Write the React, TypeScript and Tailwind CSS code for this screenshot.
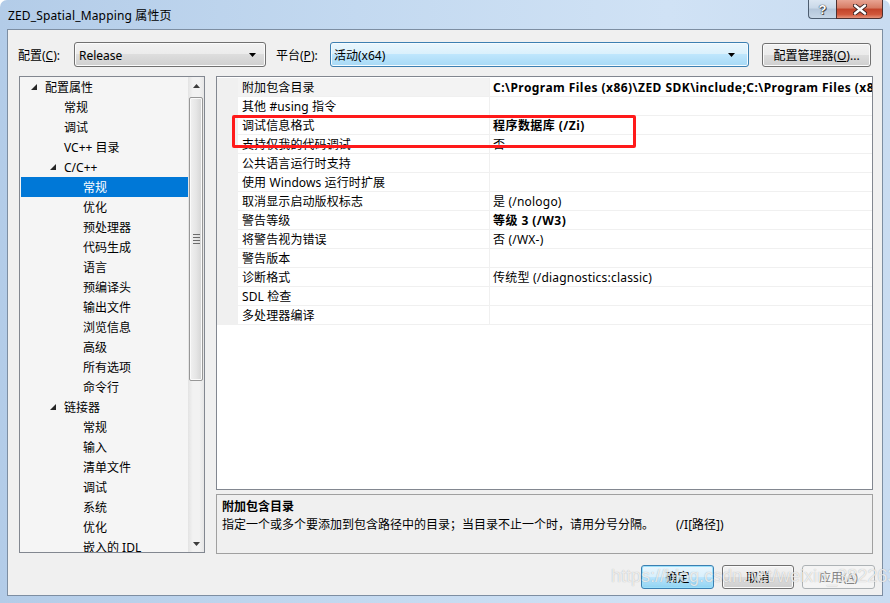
import React from "react";

type TreeItem = { label: string; level: number; arrow?: boolean; selected?: boolean };

const tree: TreeItem[] = [
  { label: "配置属性", level: 0, arrow: true },
  { label: "常规", level: 1 },
  { label: "调试", level: 1 },
  { label: "VC++ 目录", level: 1 },
  { label: "C/C++", level: 1, arrow: true },
  { label: "常规", level: 2, selected: true },
  { label: "优化", level: 2 },
  { label: "预处理器", level: 2 },
  { label: "代码生成", level: 2 },
  { label: "语言", level: 2 },
  { label: "预编译头", level: 2 },
  { label: "输出文件", level: 2 },
  { label: "浏览信息", level: 2 },
  { label: "高级", level: 2 },
  { label: "所有选项", level: 2 },
  { label: "命令行", level: 2 },
  { label: "链接器", level: 1, arrow: true },
  { label: "常规", level: 2 },
  { label: "输入", level: 2 },
  { label: "清单文件", level: 2 },
  { label: "调试", level: 2 },
  { label: "系统", level: 2 },
  { label: "优化", level: 2 },
  { label: "嵌入的 IDL", level: 2 },
];

type Prop = { name: string; value: string; bold?: boolean };

const props: Prop[] = [
  { name: "附加包含目录", value: "C:\\Program Files (x86)\\ZED SDK\\include;C:\\Program Files (x86)\\ZED SDK\\dependencies", bold: true },
  { name: "其他 #using 指令", value: "" },
  { name: "调试信息格式", value: "程序数据库 (/Zi)", bold: true },
  { name: "支持仅我的代码调试", value: "否" },
  { name: "公共语言运行时支持", value: "" },
  { name: "使用 Windows 运行时扩展", value: "" },
  { name: "取消显示启动版权标志", value: "是 (/nologo)" },
  { name: "警告等级", value: "等级 3 (/W3)", bold: true },
  { name: "将警告视为错误", value: "否 (/WX-)" },
  { name: "警告版本", value: "" },
  { name: "诊断格式", value: "传统型 (/diagnostics:classic)" },
  { name: "SDL 检查", value: "" },
  { name: "多处理器编译", value: "" },
];

const indentClass = ["pl-[11px]", "pl-[30px]", "pl-[49px]"];
const textIndentClass = ["pl-[25px]", "pl-[44px]", "pl-[63px]"];

function Expander() {
  return (
    <svg width="6" height="6" viewBox="0 0 6 6" className="block">
      <polygon points="6,0 6,6 0,6" fill="#262626" />
    </svg>
  );
}

function ComboArrow() {
  return (
    <svg width="7" height="4" viewBox="0 0 7 4" className="block">
      <polygon points="0,0 7,0 3.5,4" fill="#000" />
    </svg>
  );
}

export default function App() {
  return (
    <div className="relative w-[890px] h-[603px] overflow-hidden rounded-t-[7px] bg-[linear-gradient(90deg,#b3cce8,#c3d9f0_40%,#d0e2f5_75%,#c9dcf1)] flex flex-col font-['Noto_Sans','Noto_Sans_CJK_SC',sans-serif] text-[12px] text-black">
      {/* title bar */}
      <div className="h-[29px] flex items-start justify-between shrink-0">
        <div className="pl-[8px] pt-[8px] leading-[16px] text-[12px] tracking-[0.15px] text-black">ZED_Spatial_Mapping 属性页</div>
        <div className="flex mr-[7px]">
          <div className="w-[28px] h-[19px] rounded-bl-[4px] border border-t-0 border-r-0 border-[#4d5d70] bg-[linear-gradient(#dbe6f2,#c9d8e8_45%,#b4c6da_50%,#c6d6e6)] flex items-center justify-center">
            <span className="font-['Liberation_Sans',sans-serif] font-bold text-[13px] leading-none text-white [text-shadow:0_0_1px_#333,0_0_1px_#333,1px_1px_0_#555]">?</span>
          </div>
          <div className="w-[47px] h-[19px] rounded-br-[4px] border border-t-0 border-[#4d3030] bg-[linear-gradient(#e8a493,#d67a63_45%,#c2432a_50%,#d0573b_80%,#e6927a)] flex items-center justify-center">
            <svg width="14" height="11" viewBox="0 0 14 11">
              <path d="M2 1.5 L12 9.5 M12 1.5 L2 9.5" stroke="#3a2020" strokeWidth="4.2" strokeLinecap="round" />
              <path d="M2 1.5 L12 9.5 M12 1.5 L2 9.5" stroke="#ffffff" strokeWidth="2.4" strokeLinecap="round" />
            </svg>
          </div>
        </div>
      </div>

      {/* client area */}
      <div className="flex-1 mx-[7px] mb-[7px] bg-[#f0f0f0] border border-[#7d8ea2] flex flex-col">
        {/* config row */}
        <div className="flex items-center mt-[12px] h-[25px] pl-[10px]">
          <div className="w-[56px] leading-[16px] pt-[2px]">配置(<span className="underline">C</span>):</div>
          <div className="w-[192px] h-[25px] rounded-[3px] border border-[#707070] bg-[linear-gradient(#f2f2f2,#ebebeb_50%,#dddddd_50%,#cfcfcf)] shadow-[inset_0_0_0_1px_#fbfbfb] flex items-center justify-between pl-[4px] pr-[9px]">
            <span className="pt-[2px]">Release</span>
            <ComboArrow />
          </div>
          <div className="w-[54px] ml-[10px] leading-[16px] pt-[2px]">平台(<span className="underline">P</span>):</div>
          <div className="w-[419px] h-[25px] rounded-[3px] border border-[#3c7fb1] bg-[linear-gradient(#eaf6fd,#d9f0fc_50%,#bee6fd_50%,#a7d9f5)] shadow-[inset_0_0_0_1px_#f4fbff] flex items-center justify-between pl-[3px] pr-[13px]">
            <span className="pt-[2px]">活动(x64)</span>
            <ComboArrow />
          </div>
          <div className="w-[109px] h-[24px] ml-[13px] rounded-[3px] border border-[#707070] bg-[linear-gradient(#f2f2f2,#ebebeb_50%,#dddddd_50%,#cfcfcf)] shadow-[inset_0_0_0_1px_#fbfbfb] flex items-center justify-center pt-[2px]">
            配置管理器(<span className="underline">O</span>)...
          </div>
        </div>

        {/* main area */}
        <div className="flex mt-[9px] pl-[11px]">
          {/* tree */}
          <div className="w-[186px] h-[477px] border border-[#828790] bg-[#f5f5f5] flex overflow-hidden">
            <div className="flex-1 flex flex-col overflow-hidden">
              {tree.map((t, i) => (
                <div
                  key={i}
                  className={`h-[20px] shrink-0 flex items-center pt-[2px] ${t.selected ? "bg-[#0078d7] text-white ml-[1px]" : ""}`}
                >
                  {t.arrow ? (
                    <div className={`flex items-center ${indentClass[t.level]}`}>
                      <div className="-mt-[2px]">
                        <Expander />
                      </div>
                      <span className="ml-[8px] leading-[16px]">{t.label}</span>
                    </div>
                  ) : (
                    <span className={`leading-[16px] ${t.selected ? "pl-[62px]" : textIndentClass[t.level]}`}>{t.label}</span>
                  )}
                </div>
              ))}
            </div>
            {/* scrollbar */}
            <div className="w-[16px] shrink-0 bg-[linear-gradient(90deg,#e3e3e3,#f2f2f2_30%,#f2f2f2_70%,#e6e6e6)] flex flex-col">
              <div className="h-[17px] flex items-center justify-center">
                <svg width="7" height="4" viewBox="0 0 7 4"><polygon points="0,4 7,4 3.5,0" fill="#3c3c3c" /></svg>
              </div>
              <div className="h-[3px]" />
              <div className="h-[284px] mx-[1px] rounded-[2px] border border-[#979797] bg-[linear-gradient(90deg,#f1f1f1,#e6e6e6_50%,#d4d4d4)] shadow-[inset_0_0_0_1px_#fafafa] flex items-center justify-center">
                <div className="flex flex-col gap-[2px]">
                  <div className="w-[7px] h-[1px] bg-[#6b6b6b]" />
                  <div className="w-[7px] h-[1px] bg-[#6b6b6b]" />
                  <div className="w-[7px] h-[1px] bg-[#6b6b6b]" />
                  <div className="w-[7px] h-[1px] bg-[#6b6b6b]" />
                </div>
              </div>
              <div className="flex-1" />
              <div className="h-[17px] flex items-center justify-center">
                <svg width="7" height="4" viewBox="0 0 7 4"><polygon points="0,0 7,0 3.5,4" fill="#3c3c3c" /></svg>
              </div>
            </div>
          </div>

          {/* right column */}
          <div className="ml-[11px] w-[657px] flex flex-col">
            <div className="h-[414px] border border-[#828790] bg-white overflow-hidden flex flex-col pt-[1px]">
              {props.map((p, i) => (
                <div key={i} className="h-[19px] shrink-0 flex border-b border-[#f0f0f0]">
                  <div className="w-[21px] bg-[#f0f0f0] shrink-0" />
                  <div className={`w-[252px] shrink-0 border-r border-[#f0f0f0] pl-[4px] pt-[2px] flex items-center whitespace-nowrap tracking-[0.1px] ${i === 0 ? "bg-[#f3f3f3]" : ""}`}>
                    <span className="leading-[16px]">{p.name}</span>
                  </div>
                  <div className={`flex-1 pl-[3px] pt-[2px] flex items-center whitespace-nowrap overflow-hidden ${p.bold ? "font-bold tracking-[0.45px]" : "tracking-[0.2px]"}`}>
                    <span className="leading-[16px]">{p.value}</span>
                  </div>
                </div>
              ))}
            </div>
            <div className="mt-[4px] h-[60px] border border-[#a0a0a0] bg-[#f0f0f0] pl-[5px] pt-[3px]">
              <div className="font-bold leading-[18px]">附加包含目录</div>
              <div className="leading-[18px] whitespace-nowrap">
                <span>指定一个或多个要添加到包含路径中的目录；当目录不止一个时，请用分号分隔。</span>
                <span className="ml-[22px]">(/I[路径])</span>
              </div>
            </div>
          </div>
        </div>

        {/* bottom buttons */}
        <div className="flex justify-end gap-[8px] mt-[11px] pr-[7px]">
          <div className="w-[73px] h-[24px] rounded-[3px] border border-[#3c7fb1] bg-[linear-gradient(#eaf6fd,#d9f0fc_50%,#bee6fd_50%,#8fd3f2)] shadow-[inset_0_0_0_1px_#9ae0fb] flex items-center justify-center pt-[1px]">确定</div>
          <div className="w-[72px] h-[24px] rounded-[3px] border border-[#707070] bg-[linear-gradient(#f2f2f2,#ebebeb_50%,#dddddd_50%,#cfcfcf)] shadow-[inset_0_0_0_1px_#fbfbfb] flex items-center justify-center pt-[1px]">取消</div>
          <div className="w-[73px] h-[24px] rounded-[3px] border border-[#adb2b5] bg-[#f4f4f4] text-[#838383] flex items-center justify-center pt-[1px]">应用(<span className="underline">A</span>)</div>
        </div>
      </div>

      {/* red annotation rectangle */}
      <div className="absolute left-[232px] top-[115px] w-[404px] h-[33px] border-[3px] border-[#ff1a1a] rounded-[2px] pointer-events-none" />

      {/* watermark */}
      <div className="absolute left-[611px] top-[565px] font-['Liberation_Sans',sans-serif] text-[18px] leading-[22px] text-white/75 [text-shadow:0_0_1px_rgba(0,0,0,0.3)] pointer-events-none whitespace-nowrap">
        https://blog.csdn.net/weixin_38226321
      </div>
    </div>
  );
}
